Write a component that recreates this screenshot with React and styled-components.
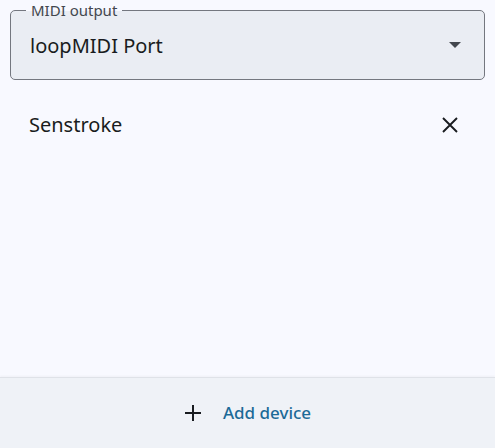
import React from 'react';
import styled, { createGlobalStyle } from 'styled-components';

const GlobalStyle = createGlobalStyle`
  html, body {
    margin: 0;
    padding: 0;
    background: #f8f9ff;
  }

  body {
    font-family: "Noto Sans", "Open Sans", sans-serif;
    color: #191c20;
  }
`;

const Page = styled.div`
  display: flex;
  flex-direction: column;
  width: 495px;
  height: 448px;
  background: #f8f9ff;
`;

const Content = styled.main`
  flex: 1;
  display: flex;
  flex-direction: column;
  padding: 10px 10px 0;
`;

const SelectBox = styled.div`
  position: relative;
  display: flex;
  align-items: center;
  justify-content: space-between;
  height: 68px;
  padding: 0 23px 0 19px;
  border: 1px solid #74777f;
  border-radius: 5px;
  background: #eaedf3;
  cursor: pointer;
`;

const FloatingLabel = styled.span`
  position: absolute;
  top: -11px;
  left: 15px;
  padding: 0 5px;
  font-size: 15px;
  line-height: 20px;
  color: #43474e;
  background: linear-gradient(#f8f9ff 55%, #eaedf3 55%);
`;

const SelectValue = styled.span`
  font-size: 20px;
  line-height: 26px;
  padding-top: 1px;
`;

const DeviceList = styled.ul`
  list-style: none;
  margin: 17px 0 0;
  padding: 0;
`;

const DeviceRow = styled.li`
  display: flex;
  align-items: center;
  justify-content: space-between;
  height: 56px;
  padding: 0 15px 0 19px;
`;

const DeviceName = styled.span`
  font-size: 20px;
  line-height: 26px;
`;

const IconButton = styled.button`
  display: flex;
  align-items: center;
  justify-content: center;
  width: 40px;
  height: 40px;
  padding: 0;
  border: none;
  border-radius: 50%;
  background: transparent;
  color: #191c20;
  cursor: pointer;
`;

const BottomBar = styled.footer`
  display: flex;
  align-items: center;
  justify-content: center;
  height: 70px;
  border-top: 1px solid #dfe2e8;
  box-shadow: 0 -1px 2px rgba(0, 0, 0, 0.04);
  background: #eff2f7;
`;

const AddButton = styled.button`
  display: flex;
  align-items: center;
  gap: 21px;
  padding: 8px 16px;
  border: none;
  background: transparent;
  font-family: inherit;
  font-size: 17px;
  font-weight: 500;
  line-height: 24px;
  color: #1c6a97;
  cursor: pointer;
`;

const PlusIcon = () => (
  <svg width="18" height="18" viewBox="0 0 18 18" fill="none">
    <path d="M9 1v16M1 9h16" stroke="#191c20" strokeWidth="2" />
  </svg>
);

const CloseIcon = () => (
  <svg width="18" height="18" viewBox="0 0 18 18" fill="none">
    <path d="M2 2l14 14M16 2L2 16" stroke="#191c20" strokeWidth="1.9" />
  </svg>
);

const DropArrow = () => (
  <svg width="12" height="6" viewBox="0 0 12 6">
    <path d="M0 0h12L6 6z" fill="#43474e" />
  </svg>
);

export default function App() {
  return (
    <>
      <GlobalStyle />
      <Page>
        <Content>
          <SelectBox>
            <FloatingLabel>MIDI output</FloatingLabel>
            <SelectValue>loopMIDI Port</SelectValue>
            <DropArrow />
          </SelectBox>
          <DeviceList>
            <DeviceRow>
              <DeviceName>Senstroke</DeviceName>
              <IconButton aria-label="Remove">
                <CloseIcon />
              </IconButton>
            </DeviceRow>
          </DeviceList>
        </Content>
        <BottomBar>
          <AddButton>
            <PlusIcon />
            Add device
          </AddButton>
        </BottomBar>
      </Page>
    </>
  );
}
